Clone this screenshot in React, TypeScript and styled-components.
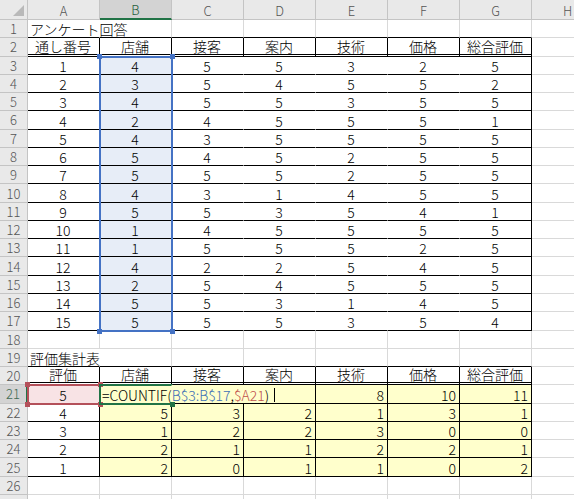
import React from "react";
import styled, { createGlobalStyle } from "styled-components";

const GlobalStyle = createGlobalStyle`
  html, body {
    margin: 0;
    padding: 0;
    background: #ffffff;
  }
  body {
    overflow: hidden;
  }
`;

const GRID_LINE = "#d9d9d9";
const HEADER_BG = "#e9e9e9";
const HEADER_LINE = "#c4c4c4";
const ACTIVE_BG = "#d3d3d3";
const EXCEL_GREEN = "#217346";
const REF_BLUE = "#4472c4";
const REF_RED = "#b4505a";
const SELECT_BLUE = "#e7edf7";
const REF_PINK = "#f8e3e5";
const YELLOW = "#ffffcc";

const COLUMNS = ["A", "B", "C", "D", "E", "F", "G", "H"];
const ROW_COUNT = 27;

type Align = "left" | "center" | "right";
type Line = "grid" | "none" | "thin" | "double";

interface CellSpec {
  text?: React.ReactNode;
  align?: Align;
  fill?: string;
  bottom?: Line;
  right?: Line;
  span?: number;
}

const lineCss = (line: Line, fill: string) => {
  switch (line) {
    case "thin":
      return "1px solid #000000";
    case "double":
      return "3px double #000000";
    case "none":
      return `1px solid ${fill === "transparent" ? "#ffffff" : fill}`;
    default:
      return `1px solid ${GRID_LINE}`;
  }
};

const Sheet = styled.div`
  display: grid;
  grid-template-columns: 28px repeat(8, 72px);
  grid-template-rows: 20px repeat(${ROW_COUNT}, 18.27px);
  width: 574px;
  height: 499px;
  overflow: hidden;
  background: #ffffff;
  font-family: "Noto Sans CJK JP", "Liberation Sans", sans-serif;
`;

const Corner = styled.div`
  grid-row: 1;
  grid-column: 1;
  display: flex;
  align-items: flex-end;
  justify-content: flex-end;
  padding: 0 3px 3px 0;
  box-sizing: border-box;
  background: ${HEADER_BG};
  border-right: 1px solid ${HEADER_LINE};
  border-bottom: 1px solid ${HEADER_LINE};
`;

const ColHeader = styled.div<{ $col: number; $active?: boolean }>`
  grid-row: 1;
  grid-column: ${(p) => p.$col};
  display: flex;
  align-items: center;
  justify-content: center;
  box-sizing: border-box;
  padding-top: 1px;
  background: ${(p) => (p.$active ? ACTIVE_BG : HEADER_BG)};
  border-right: 1px solid ${HEADER_LINE};
  border-bottom: ${(p) =>
    p.$active ? `2px solid ${EXCEL_GREEN}` : `1px solid ${HEADER_LINE}`};
  color: ${(p) => (p.$active ? "#1f5c3a" : "#555555")};
  font-size: 13px;
  font-weight: 300;
  line-height: 1;
`;

const RowHeader = styled.div<{ $row: number; $active?: boolean }>`
  grid-row: ${(p) => p.$row};
  grid-column: 1;
  display: flex;
  align-items: center;
  justify-content: center;
  box-sizing: border-box;
  background: ${(p) => (p.$active ? ACTIVE_BG : HEADER_BG)};
  border-right: ${(p) =>
    p.$active ? `2px solid ${EXCEL_GREEN}` : `1px solid ${HEADER_LINE}`};
  border-bottom: 1px solid ${HEADER_LINE};
  color: ${(p) => (p.$active ? "#3f6b52" : "#555555")};
  font-size: 13px;
  font-weight: 300;
  line-height: 1;
`;

const Cell = styled.div<{
  $row: number;
  $col: number;
  $span: number;
  $align: Align;
  $fill: string;
  $bottom: Line;
  $right: Line;
}>`
  grid-row: ${(p) => p.$row};
  grid-column: ${(p) => p.$col} / span ${(p) => p.$span};
  display: flex;
  align-items: flex-end;
  justify-content: ${(p) =>
    p.$align === "left" ? "flex-start" : p.$align === "right" ? "flex-end" : "center"};
  box-sizing: border-box;
  padding: 0 3px 1px 2px;
  background: ${(p) => p.$fill};
  border-right: ${(p) => lineCss(p.$right, p.$fill)};
  border-bottom: ${(p) => lineCss(p.$bottom, p.$fill)};
  color: #000000;
  font-size: 14px;
  font-weight: 300;
  line-height: 14px;
  white-space: nowrap;
  overflow: visible;
  min-width: 0;
`;

// coloured frame Excel draws around a referenced range while editing
const RefFrame = styled.div<{ $rows: string; $col: number; $color: string; $open?: boolean }>`
  grid-row: ${(p) => p.$rows};
  grid-column: ${(p) => p.$col};
  position: relative;
  z-index: 2;
  margin: -1px;
  border: 2px solid ${(p) => p.$color};
  border-right-color: ${(p) => (p.$open ? "transparent" : p.$color)};
  pointer-events: none;
`;

const Handle = styled.span<{ $color: string; $v: "top" | "bottom"; $h: "left" | "right" }>`
  position: absolute;
  width: 5px;
  height: 5px;
  background: ${(p) => p.$color};
  ${(p) => p.$v}: -4px;
  ${(p) => p.$h}: -4px;
`;

const Ref = styled.span<{ $color: string }>`
  color: ${(p) => p.$color};
`;

const Caret = styled.span`
  display: inline-block;
  width: 1px;
  height: 14px;
  margin-left: 5px;
  background: #000000;
  vertical-align: -2px;
`;

const surveyHeaders = ["通し番号", "店舗", "接客", "案内", "技術", "価格", "総合評価"];
const summaryHeaders = ["評価", "店舗", "接客", "案内", "技術", "価格", "総合評価"];

const answers = [
  [1, 4, 5, 5, 3, 2, 5],
  [2, 3, 5, 4, 5, 5, 2],
  [3, 4, 5, 5, 3, 5, 5],
  [4, 2, 4, 5, 5, 5, 1],
  [5, 4, 3, 5, 5, 5, 5],
  [6, 5, 4, 5, 2, 5, 5],
  [7, 5, 5, 5, 2, 5, 5],
  [8, 4, 3, 1, 4, 5, 5],
  [9, 5, 5, 3, 5, 4, 1],
  [10, 1, 4, 5, 5, 5, 5],
  [11, 1, 5, 5, 5, 2, 5],
  [12, 4, 2, 2, 5, 4, 5],
  [13, 2, 5, 4, 5, 5, 5],
  [14, 5, 5, 3, 1, 4, 5],
  [15, 5, 5, 5, 3, 5, 4],
];

const counts = [
  [4, 5, 3, 2, 1, 3, 1],
  [3, 1, 2, 2, 3, 0, 0],
  [2, 2, 1, 1, 2, 2, 1],
  [1, 2, 0, 1, 1, 0, 2],
];

const blankRow = (): CellSpec[] => COLUMNS.map(() => ({}));

const titleRow = (title: string): CellSpec[] => [
  { text: title, align: "left", right: "none", bottom: "thin" },
  ...Array.from({ length: 6 }, (): CellSpec => ({ bottom: "thin" })),
  {},
];

const headerRow = (labels: string[]): CellSpec[] => [
  ...labels.map(
    (label): CellSpec => ({
      text: label,
      fill: "#ffffff",
      right: "thin",
      bottom: "double",
    })
  ),
  {},
];

const answerRow = (values: number[]): CellSpec[] => [
  ...values.map(
    (v, i): CellSpec => ({
      text: v,
      fill: i === 1 ? SELECT_BLUE : "#ffffff",
      right: i === 6 ? "thin" : "none",
      bottom: "thin",
    })
  ),
  {},
];

const countRow = (values: number[]): CellSpec[] => [
  ...values.map(
    (v, i): CellSpec => ({
      text: v,
      align: i === 0 ? "center" : "right",
      fill: i === 0 ? "#ffffff" : YELLOW,
      right: "thin",
      bottom: "thin",
    })
  ),
  {},
];

const formula = (
  <>
    =COUNTIF(<Ref $color="#3d6fb6">B$3:B$17</Ref>,<Ref $color="#c0504d">$A21</Ref> )
    <Caret />
  </>
);

const editRow: CellSpec[] = [
  { text: 5, fill: REF_PINK, right: "thin", bottom: "thin" },
  { text: formula, align: "left", fill: YELLOW, right: "thin", bottom: "thin", span: 3 },
  { text: 8, align: "right", fill: YELLOW, right: "thin", bottom: "thin" },
  { text: 10, align: "right", fill: YELLOW, right: "thin", bottom: "thin" },
  { text: 11, align: "right", fill: YELLOW, right: "thin", bottom: "thin" },
  {},
];

const rows: CellSpec[][] = [
  titleRow("アンケート回答"),
  headerRow(surveyHeaders),
  ...answers.map(answerRow),
  blankRow(),
  titleRow("評価集計表"),
  headerRow(summaryHeaders),
  editRow,
  ...counts.map(countRow),
  blankRow(),
  blankRow(),
];

const corners: ["top" | "bottom", "left" | "right"][] = [
  ["top", "left"],
  ["top", "right"],
  ["bottom", "left"],
  ["bottom", "right"],
];

export default function App() {
  return (
    <>
      <GlobalStyle />
      <Sheet>
        <Corner>
          <svg width="11" height="11" viewBox="0 0 11 11">
            <polygon points="11,0 11,11 0,11" fill="#b9b9b9" />
          </svg>
        </Corner>
        {COLUMNS.map((c, i) => (
          <ColHeader key={c} $col={i + 2} $active={c === "B"}>
            {c}
          </ColHeader>
        ))}
        {rows.map((_, r) => (
          <RowHeader key={r} $row={r + 2} $active={r + 1 === 21}>
            {/* the last row only peeks in at the bottom edge */}
            {r + 1 < ROW_COUNT ? r + 1 : null}
          </RowHeader>
        ))}
        {rows.map((cells, r) => {
          let col = 2;
          return cells.map((cell, i) => {
            const span = cell.span ?? 1;
            const at = col;
            col += span;
            return (
              <Cell
                key={`${r}-${i}`}
                $row={r + 2}
                $col={at}
                $span={span}
                $align={cell.align ?? "center"}
                $fill={cell.fill ?? "transparent"}
                $bottom={cell.bottom ?? "grid"}
                $right={cell.right ?? "grid"}
              >
                {cell.text}
              </Cell>
            );
          });
        })}
        <RefFrame $rows="4 / 19" $col={3} $color={REF_BLUE}>
          {corners.map(([v, h]) => (
            <Handle key={v + h} $color={REF_BLUE} $v={v} $h={h} />
          ))}
        </RefFrame>
        <RefFrame $rows="22" $col={2} $color={REF_RED}>
          {corners.map(([v, h]) => (
            <Handle key={v + h} $color={REF_RED} $v={v} $h={h} />
          ))}
        </RefFrame>
        <RefFrame $rows="22" $col={3} $color={EXCEL_GREEN} $open>
          <Handle $color={EXCEL_GREEN} $v="bottom" $h="right" />
        </RefFrame>
      </Sheet>
    </>
  );
}
